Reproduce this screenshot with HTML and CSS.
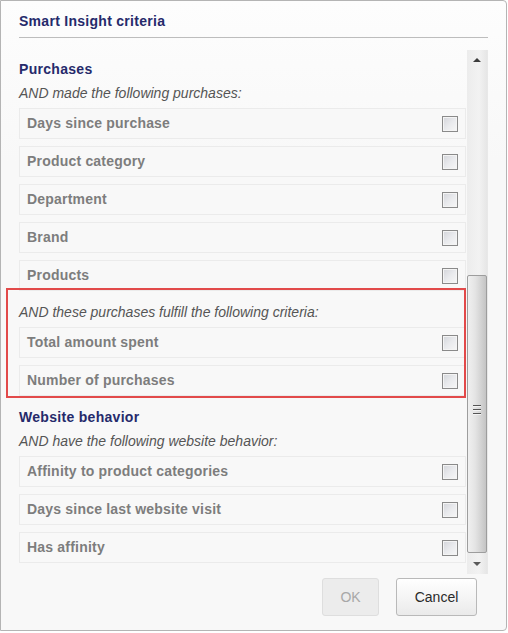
FILE: index.html
```html
<!DOCTYPE html>
<html>
<head>
<meta charset="utf-8">
<link rel="stylesheet" href="styles.css">
</head>
<body>
<div class="dialog">
  <div class="header"><h1 class="title">Smart Insight criteria</h1></div>
  <div class="body">
    <div class="content">
      <h2 class="section">Purchases</h2>
      <p class="hint">AND made the following purchases:</p>
      <div class="rows">
        <div class="row"><span>Days since purchase</span><i class="cb"></i></div>
        <div class="row"><span>Product category</span><i class="cb"></i></div>
        <div class="row"><span>Department</span><i class="cb"></i></div>
        <div class="row"><span>Brand</span><i class="cb"></i></div>
        <div class="row"><span>Products</span><i class="cb"></i></div>
      </div>
      <div class="group">
        <p class="hint gap">AND these purchases fulfill the following criteria:</p>
        <div class="rows">
          <div class="row"><span>Total amount spent</span><i class="cb"></i></div>
          <div class="row"><span>Number of purchases</span><i class="cb"></i></div>
        </div>
        <div class="highlight"></div>
      </div>
      <h2 class="section gap">Website behavior</h2>
      <p class="hint">AND have the following website behavior:</p>
      <div class="rows">
        <div class="row"><span>Affinity to product categories</span><i class="cb"></i></div>
        <div class="row"><span>Days since last website visit</span><i class="cb"></i></div>
        <div class="row"><span>Has affinity</span><i class="cb"></i></div>
      </div>
    </div>
    <div class="scrollbar">
      <div class="arrow up"></div>
      <div class="track">
        <div class="thumb"><div class="grip"><b></b><b></b><b></b></div></div>
      </div>
      <div class="arrow down"></div>
    </div>
  </div>
  <div class="footer">
    <button class="btn ok">OK</button>
    <button class="btn cancel">Cancel</button>
  </div>
</div>
</body>
</html>
```

FILE: styles.css
```css
html, body {
  margin: 0;
  padding: 0;
  background: #ffffff;
}
body {
  font-family: "Liberation Sans", Arial, sans-serif;
}
.dialog {
  width: 507px;
  height: 631px;
  box-sizing: border-box;
  border: 1px solid #b4b4b4;
  border-radius: 0 4px 4px 0;
  background: linear-gradient(#fdfdfd 0px, #f8f8f8 160px, #f8f8f8 100%);
  display: flex;
  flex-direction: column;
}
.header {
  margin: 0 18px 0 18px;
  height: 36px;
  border-bottom: 1px solid #bdbdbd;
  box-sizing: content-box;
}
.title {
  margin: 0;
  padding-top: 12px;
  font-size: 14px;
  line-height: 16px;
  font-weight: bold;
  letter-spacing: 0.28px;
  color: #252a6b;
}
.body {
  margin: 12px 18px 0 18px;
  display: flex;
  height: 524px;
}
.content {
  width: 448px;
  display: flex;
  flex-direction: column;
  padding-top: 9px;
}
.section {
  margin: 0;
  font-size: 14px;
  line-height: 20px;
  font-weight: bold;
  letter-spacing: 0.3px;
  color: #252a6b;
}
.hint {
  margin: 4px 0 5px 0;
  font-size: 14px;
  line-height: 20px;
  font-style: italic;
  color: #555555;
}
.gap {
  margin-top: 11px;
}
.rows {
  display: flex;
  flex-direction: column;
  gap: 7px;
}
.row {
  height: 31px;
  box-sizing: border-box;
  border: 1px solid #ebebeb;
  background: #f8f8f8;
  display: flex;
  align-items: center;
  justify-content: space-between;
  padding: 0 7px 1px 7px;
  font-size: 14px;
  font-weight: bold;
  letter-spacing: 0.2px;
  color: #7d7d7d;
}
.cb {
  display: block;
  width: 16px;
  height: 16px;
  margin-top: 1px;
  box-sizing: border-box;
  border: 1px solid #8a8a8a;
  box-shadow: inset 0 0 0 1px #f4f4f4;
  background: linear-gradient(135deg, #d3d5da 0%, #e9eaed 50%, #f7f7f7 100%);
}
.group {
  position: relative;
}
.highlight {
  position: absolute;
  left: -13px;
  top: -3px;
  width: 460px;
  height: 110px;
  box-sizing: border-box;
  border: 2px solid #e24a4a;
  pointer-events: none;
}
.scrollbar {
  width: 20px;
  margin-left: 1px;
  display: flex;
  flex-direction: column;
  background: linear-gradient(90deg, #ececec, #f2f2f2 60%, #e6e6e6);
  border-right: 1px solid #e8e8e8;
}
.arrow {
  height: 20px;
  position: relative;
}
.arrow::after {
  content: "";
  position: absolute;
  left: 6px;
  width: 0;
  height: 0;
  border-left: 4px solid transparent;
  border-right: 4px solid transparent;
}
.arrow.up::after {
  top: 8px;
  border-bottom: 4px solid #3c3c3c;
}
.arrow.down::after {
  top: 8px;
  border-top: 4px solid #5a5a5a;
}
.track {
  flex: 1;
  display: flex;
  flex-direction: column;
  padding-top: 205px;
  padding-bottom: 1px;
}
.thumb {
  flex: 1;
  box-sizing: border-box;
  border: 1px solid #9d9d9d;
  border-radius: 2px;
  background: linear-gradient(90deg, #f0f0f0 0%, #e4e4e4 40%, #cfcfcf 80%, #c4c4c4 100%);
  display: flex;
  align-items: center;
  justify-content: center;
}
.grip {
  display: flex;
  flex-direction: column;
  gap: 2px;
  margin-top: -8px;
}
.grip b {
  display: block;
  width: 8px;
  height: 1px;
  background: #555;
  border-bottom: 1px solid #f4f4f4;
}
.footer {
  display: flex;
  justify-content: flex-end;
  gap: 17px;
  padding: 4px 29px 0 0;
}
.btn {
  height: 38px;
  box-sizing: border-box;
  font-family: "Liberation Sans", Arial, sans-serif;
  font-size: 14px;
  border-radius: 3px;
  padding: 0;
}
.ok {
  width: 57px;
  border: 1px solid #dedede;
  background: #ececec;
  color: #a8a8a8;
}
.cancel {
  width: 81px;
  border: 1px solid #b9b9b9;
  background: linear-gradient(#ffffff, #f3f3f3 60%, #eaeaea);
  color: #2a2a2a;
}
```
